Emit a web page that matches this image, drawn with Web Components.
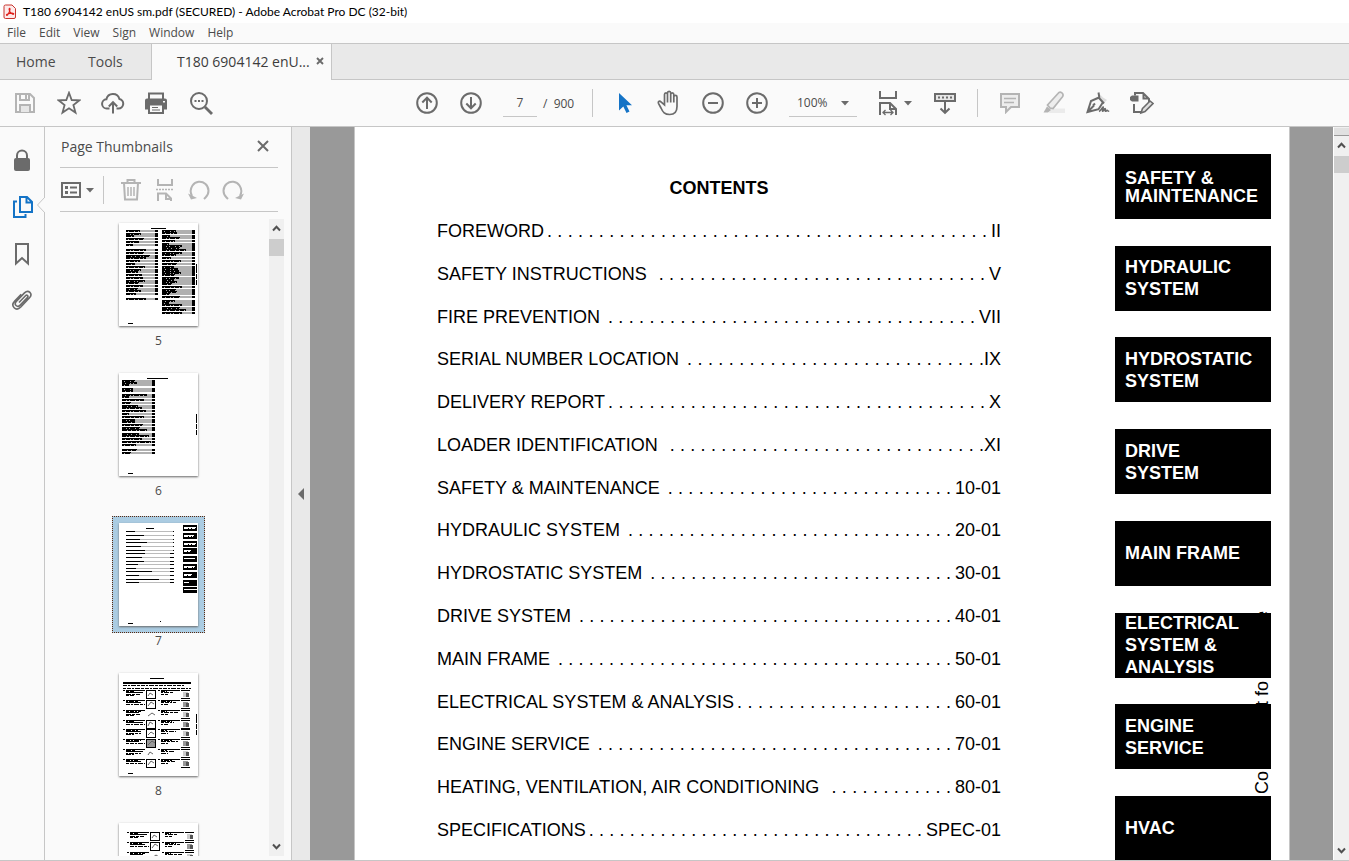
<!DOCTYPE html>
<html lang="en">
<head>
<meta charset="utf-8">
<title>T180 6904142 enUS sm.pdf (SECURED) - Adobe Acrobat Pro DC (32-bit)</title>
<style>
  html, body { margin: 0; height: 100%; overflow: hidden; }
  body { font-family: "Open Sans", "Noto Sans", sans-serif; font-size: 12px; color: #4b4b4b; background: #fafafa; }
</style>
</head>
<body>
<acro-app></acro-app>

<script>
const define = (name, html, setup) => {
  const template = document.createElement('template');
  template.innerHTML = '<style>*{box-sizing:border-box}button{font:inherit;color:inherit;background:none;border:0;padding:0;margin:0}a{color:inherit;text-decoration:none}</style>' + html;
  customElements.define(name, class extends HTMLElement {
    connectedCallback() {
      if (this.shadowRoot) return;
      this.attachShadow({ mode: 'open' }).appendChild(template.content.cloneNode(true));
      if (setup) setup.call(this, this.shadowRoot);
    }
  });
};

/* ---------- Icons ---------- */
const S = 'fill="none" stroke="currentColor" stroke-width="2"';
const ICONS = {
  pdf: `<svg width="14" height="16" viewBox="0 0 14 16"><path d="M2.5 1h6.500l3.500 3.500v8.500q0 1.500-1.500 1.500h-8.500q-1.500 0-1.500-1.500v-10.500q0-1.500 1.500-1.500z" fill="#fdeaea" stroke="#c8342e"/><path d="M3.600 11.300c-1-1.100 3-2.300 6.300-2.100c1.700.4.600 1.500-.6.900c-2.300-1.300-3.800-4.500-3-5.700c1.300-.7.900 2.800-1.500 6.200c-.4.600-.9.900-1.200.7z" fill="none" stroke="#e0201b" stroke-width="1.100"/></svg>`,
  save: `<svg width="22" height="22" viewBox="0 0 22 22"><g fill="none" stroke="#b4b4b4" stroke-width="2"><path d="M2 2h14l4 4v14h-18z"/><path d="M6 2v6h9v-6"/><path d="M6 20v-7h10v7" fill="#e6e6e6"/></g><path d="M11 3h2v4h-2z" fill="#b4b4b4"/></svg>`,
  star: `<svg width="24" height="24" viewBox="0 0 24 24"><path d="M12 1.800l2.700 7.200l7.800.3l-6.100 4.800l2.100 7.500l-6.500-4.300l-6.500 4.300l2.100-7.500l-6.100-4.800l7.800-.3z" fill="none" stroke="currentColor" stroke-width="1.800"/></svg>`,
  cloud: `<svg width="24" height="24" viewBox="0 0 24 24"><path d="M8.500 17.500h-2.500a4.600 4.600 0 0 1-.6-9.200a6.700 6.700 0 0 1 13-.3a4.800 4.800 0 0 1-.9 9.500h-2" ${S}/><path d="M12 22.500v-11M7.800 15.500l4.200-4.300l4.200 4.300" ${S}/></svg>`,
  print: `<svg width="24" height="24" viewBox="0 0 24 24"><path d="M4 8v-5.500h14v5.500" ${S}/><path d="M2 7.500h18a2 2 0 0 1 2 2v9h-4v-3.500h-14v3.500h-4v-9a2 2 0 0 1 2-2z" fill="currentColor"/><path d="M4 13.500h14v8.500h-14z" fill="#fafafa" stroke="currentColor" stroke-width="2"/><path d="M7 16.500h6M7 19h8" stroke="currentColor" stroke-width="1.200"/><path d="M18 10h2v1.500h-2z" fill="#fafafa"/></svg>`,
  search: `<svg width="24" height="24" viewBox="0 0 24 24"><circle cx="10" cy="10" r="8" ${S}/><path d="M16 16l7 7" stroke="currentColor" stroke-width="2.800"/><path d="M5.500 9h2v2h-2zM9 9h2v2h-2zM12.500 9h2v2h-2z" fill="currentColor"/></svg>`,
  up: `<svg width="24" height="24" viewBox="0 0 24 24"><circle cx="12" cy="12" r="9.800" ${S}/><path d="M12 18v-11M7.300 11.500l4.700-4.800l4.700 4.800" ${S}/></svg>`,
  down: `<svg width="24" height="24" viewBox="0 0 24 24"><circle cx="12" cy="12" r="9.800" ${S}/><path d="M12 6v11M7.300 12.500l4.700 4.800l4.700-4.800" ${S}/></svg>`,
  cursor: `<svg width="24" height="24" viewBox="0 0 24 24"><path d="M6 2v17.500l4.300-4l3.200 6.500l3-1.400l-3.100-6.300h5.600z" fill="#1473c6"/></svg>`,
  hand: `<svg width="24" height="26" viewBox="0 0 24 26"><path d="M7.500 15v-10.500c0-2.200 3-2.200 3 0v-1.500c0-2.200 3.200-2.200 3.200 0v1.500c0-2.200 3.100-2.200 3.100 0v2.500c0-2.100 3.200-2.100 3.200 0v9.500c0 5.500-3 8-7.300 8c-5 0-6.800-2.300-8.700-6.500l-2.500-4.700c-.7-2.200 1.300-2.700 2.500-1.300zM10.500 4.500v8M13.700 4v8.500M16.800 5.500v7" fill="none" stroke="currentColor" stroke-width="1.700"/></svg>`,
  minus: `<svg width="24" height="24" viewBox="0 0 24 24"><circle cx="12" cy="12" r="9.800" ${S}/><path d="M7 12h10" ${S}/></svg>`,
  plus: `<svg width="24" height="24" viewBox="0 0 24 24"><circle cx="12" cy="12" r="9.800" ${S}/><path d="M7 12h10M12 7v10" ${S}/></svg>`,
  caret: `<svg width="8" height="6" viewBox="0 0 8 6"><path d="M0 1h8l-4 4.500z" fill="#6b6b6b"/></svg>`,
  fit: `<svg width="18" height="26" viewBox="0 0 18 26"><path d="M1 1v7h16v-7M1 25v-12h10l6 6v6" ${S}/><path d="M11 13v6h6" ${S}/><path d="M3.500 22.500h11M6.500 20l-2.500 2.500l2.500 2.500M11.500 20l2.500 2.500l-2.500 2.500" fill="none" stroke="currentColor" stroke-width="1.300"/></svg>`,
  scroll: `<svg width="24" height="24" viewBox="0 0 24 24"><path d="M2 3h20v7h-20z" fill="#e6e6e6" stroke="currentColor" stroke-width="2"/><path d="M5 6.500h14" stroke="currentColor" stroke-width="2" stroke-dasharray="2 2"/><path d="M12 11v10.500M7.500 17.500l4.500 4.300l4.500-4.300" ${S}/></svg>`,
  comment: `<svg width="22" height="22" viewBox="0 0 22 22"><path d="M2 2h18v13h-8l-5 5v-5h-5z" fill="#ededed" stroke="#b4b4b4" stroke-width="2"/><path d="M5 6.500h12M5 10.500h10" stroke="#b4b4b4" stroke-width="1.500"/></svg>`,
  marker: `<svg width="24" height="24" viewBox="0 0 24 24"><path d="M8 17.500h15v4.500h-16z" fill="#ebebeb"/><path d="M5.500 14l10.500-11.500a2.700 2.700 0 0 1 4.500 3.300l-9.500 11.700l-3-.5z" fill="#ededed" stroke="#b4b4b4" stroke-width="1.700"/><path d="M5 15.500l4 3.500l-3 2.500h-4.500z" fill="#b4b4b4"/></svg>`,
  sign: `<svg width="24" height="24" viewBox="0 0 24 24"><path d="M13 2.500l4 4l4 2.500l-4 4z" fill="#dedede"/><path d="M12.500 1.500l1 6l4.500 5M13 6.500l-8 3.500l-3.500 11l11-2.800l4-6.200M2 20.500l6-6M7 14.500l2-2" fill="none" stroke="currentColor" stroke-width="2"/><path d="M13 20.500c2.500-1 3.500-5 4.200-4.500c.5.800-1.500 4-.7 4.300c1 .1 1.700-3 2.700-2.600c.7.400-.6 2.400.2 2.600c1 .2 1-1.300 1.800-1c.6.200.2 1 2 1" fill="none" stroke="currentColor" stroke-width="1.600"/></svg>`,
  edit: `<svg width="24" height="24" viewBox="0 0 24 24"><path d="M5 4.500v-2.500h8l6 6v3M13.500 2v5.500h5.500M4 13v8h8" ${S}/><path d="M2 4.500h6.500v6h-6.500l-2-1.500v-3z" fill="currentColor"/><path d="M12.500 17.500l7.500-7.500l3 2.500l-8 8l-4 1.500z" fill="#dedede" stroke="currentColor" stroke-width="1.600"/></svg>`,
  lock: `<svg width="20" height="24" viewBox="0 0 20 24"><path d="M5 11v-3.500a5 5 0 0 1 10 0v3.500" ${S}/><rect x="2" y="10" width="16" height="13" rx="2" fill="currentColor"/></svg>`,
  pages: `<svg width="24" height="24" viewBox="0 0 24 24"><path d="M10 2h7l5 5v10h-12z M16.500 2v5.500h5.500" fill="none" stroke="#1473c6" stroke-width="2"/><path d="M7 6.500h-3v15.500h11.500v-3" fill="none" stroke="#1473c6" stroke-width="2"/></svg>`,
  bookmark: `<svg width="16" height="24" viewBox="0 0 16 24"><path d="M2 2h12v19.500l-6-5.500l-6 5.500z" ${S}/></svg>`,
  clip: `<svg width="22" height="24" viewBox="0 0 22 24"><path d="M8 13.500l6.500-6.700c1.500-1.500 3.300.3 1.900 1.800l-7.200 7.500c-3 3-6.700-.7-3.900-3.700l8.200-8.500c4-3.900 8.700.8 5 4.800l-8.700 9.300c-4.900 4.900-10.800-1-6.100-6l6.500-6.800" fill="none" stroke="currentColor" stroke-width="1.600"/></svg>`,
  close: `<svg width="14" height="14" viewBox="0 0 14 14"><path d="M2 2l10 10M12 2l-10 10" stroke="currentColor" stroke-width="2"/></svg>`,
  closeSmall: `<svg width="8" height="8" viewBox="0 0 8 8"><path d="M1 1l6 6M7 1l-6 6" stroke="currentColor" stroke-width="1.900"/></svg>`,
  options: `<svg width="20" height="18" viewBox="0 0 20 18"><path d="M1 2h18v14h-18z" ${S}/><path d="M4 5h3v3h-3zM4 10h3v3h-3z" fill="currentColor"/><path d="M9 6.500h7M9 11.500h7" ${S}/></svg>`,
  trash: `<svg width="20" height="24" viewBox="0 0 20 24"><g fill="none" stroke="currentColor" stroke-width="2"><path d="M0 5h20M6.500 4.500v-2.500h7v2.500M3 5l1 16.500h12l1-16.500"/><path d="M7 9v9M10 9v9M13 9v9" stroke-width="1.500"/></g></svg>`,
  split: `<svg width="18" height="24" viewBox="0 0 18 24"><path d="M2 1v6h14v-6M2 23v-7.500h8l5 5v2.500M10 15.500v5.500h5" ${S}/><path d="M0 11.500h18" stroke="currentColor" stroke-width="1.600" stroke-dasharray="2 1"/></svg>`,
  ccw: `<svg width="22" height="22" viewBox="0 0 22 22"><path d="M4 17c-1.800-3.500-1.500-7.500.5-10.500c3-4.300 9-5 13-1.500c4 3.700 4 9.500 0 13.500l-1.500 1.500" ${S}/><path d="M0 14.500l3 6l6-1.500z" fill="currentColor"/></svg>`,
  cw: `<svg width="22" height="22" viewBox="0 0 22 22"><g transform="matrix(-1 0 0 1 22 0)"><path d="M4 17c-1.800-3.500-1.500-7.500.5-10.500c3-4.300 9-5 13-1.500c4 3.700 4 9.500 0 13.500l-1.500 1.500" ${S}/><path d="M0 14.500l3 6l6-1.500z" fill="currentColor"/></g></svg>`,
  chevUp: `<svg width="9" height="7" viewBox="0 0 9 7"><path d="M1 5.500l3.500-3.700l3.500 3.700" fill="none" stroke="#505050" stroke-width="2"/></svg>`,
  chevDown: `<svg width="9" height="7" viewBox="0 0 9 7"><path d="M1 1.500l3.500 3.700l3.500-3.700" fill="none" stroke="#505050" stroke-width="2"/></svg>`,
  collapse: `<svg width="6" height="12" viewBox="0 0 6 12"><path d="M6 0v12l-6-6z" fill="#6b6b6b"/></svg>`
};

define('acro-icon', `<style>:host{display:flex;align-items:center;justify-content:center;flex:none}svg{display:block;flex:none}</style><span id="i"></span>`,
  function (root) { root.getElementById('i').innerHTML = ICONS[this.getAttribute('name')]; });

define('tool-button', `<style>
  :host{display:flex;flex:none;width:24px;height:26px;color:#6b6b6b}
  button{display:flex;width:100%;height:100%;align-items:center;justify-content:center}
</style><button type="button"><acro-icon></acro-icon></button>`,
  function (root) {
    root.querySelector('button').setAttribute('aria-label', this.getAttribute('label'));
    root.querySelector('acro-icon').replaceWith(Object.assign(document.createElement('template'), { innerHTML: `<acro-icon name="${this.getAttribute('icon')}"></acro-icon>` }).content);
  });

/* ---------- Window chrome ---------- */
define('title-bar', `<style>
  :host{display:flex;align-items:center;height:23px;padding-left:3px;gap:6px;background:#fff;color:#000;font-family:Lato,"Open Sans",sans-serif}
</style><acro-icon name="pdf"></acro-icon><span><slot></slot></span>`);

define('menu-bar', `<style>
  :host{display:block;background:#fafafa;border-bottom:1px solid #c6c6c6}
  nav{display:flex;align-items:center;height:20px;padding:0 0 2px 7px;gap:13px}
</style><nav><button>File</button><button>Edit</button><button>View</button><button>Sign</button><button>Window</button><button>Help</button></nav>`);

define('tab-strip', `<style>
  :host{display:flex;height:36px;background:#e9e9e9;font-size:14px;box-shadow:inset 0 -1px #c6c6c6}
  .plain{padding:0 0 2px 16px;width:72px;text-align:left}
  .tools{width:79px}
  .doc{display:flex;align-items:center;width:181px;padding:0 0 2px 25px;background:#fafafa;border:solid #c6c6c6;border-width:0 1px;color:#3c3c3c}
  .doc span{flex:1;white-space:nowrap}
  .close{width:25px;height:20px;display:flex;justify-content:center;align-items:center;color:#6b6b6b}
</style>
<button class="plain">Home</button><button class="plain tools">Tools</button>
<div class="doc"><span>T180 6904142 enU...</span><button class="close" aria-label="Close tab"><acro-icon name="closeSmall"></acro-icon></button></div>`);

define('tool-bar', `<style>
  :host{display:flex;align-items:center;height:47px;padding-left:13px;background:#fafafa;border-bottom:1px solid #c6c6c6;gap:20px}
  .nav{margin-left:182px}
  .page{display:flex;gap:6px;align-items:center;white-space:pre;width:69px}
  input{width:34px;height:27px;border:0;border-bottom:1px solid #c6c6c6;background:none;font:inherit;color:inherit;text-align:center;padding:0;outline:0;flex:none}
  .rule{width:1px;height:28px;background:#c6c6c6}
  .zoom{display:grid;grid-template:27px / 68px;align-items:center}
  .zoom>*{grid-area:1/1}
  select{appearance:none;height:27px;border:0;border-bottom:1px solid #c6c6c6;background:none;font:inherit;color:inherit;padding:0 0 0 8px;border-radius:0}
  .zoom acro-icon{justify-self:end;margin-right:8px;pointer-events:none}
  .fit{display:flex;align-items:center;gap:4px}
  .fit tool-button{width:22px}
  .fit acro-icon{width:10px}
</style>
<tool-button icon="save" label="Save"></tool-button>
<tool-button icon="star" label="Star"></tool-button>
<tool-button icon="cloud" label="Upload"></tool-button>
<tool-button icon="print" label="Print"></tool-button>
<tool-button icon="search" label="Find"></tool-button>
<tool-button class="nav" icon="up" label="Previous page"></tool-button>
<tool-button icon="down" label="Next page"></tool-button>
<label class="page"><input value="7" aria-label="Page number"><span>/  900</span></label>
<span class="rule"></span>
<tool-button icon="cursor" label="Select"></tool-button>
<tool-button icon="hand" label="Pan"></tool-button>
<tool-button icon="minus" label="Zoom out"></tool-button>
<tool-button icon="plus" label="Zoom in"></tool-button>
<label class="zoom"><select aria-label="Zoom level"><option>100%</option></select><acro-icon name="caret"></acro-icon></label>
<span class="fit"><tool-button icon="fit" label="Fit width"></tool-button><acro-icon name="caret"></acro-icon></span>
<tool-button icon="scroll" label="Scrolling"></tool-button>
<span class="rule"></span>
<tool-button icon="comment" label="Comment"></tool-button>
<tool-button icon="marker" label="Highlight"></tool-button>
<tool-button icon="sign" label="Sign"></tool-button>
<tool-button icon="edit" label="Edit"></tool-button>`);

define('side-rail', `<style>
  :host{display:block;position:relative;width:45px;flex:none;border-right:1px solid #c6c6c6;background:#fafafa}
  nav{display:flex;flex-direction:column;align-items:center;padding-top:20px;gap:21px}
  svg{position:absolute;right:-1px;top:70px}
</style><nav>
<tool-button icon="lock" label="Security"></tool-button>
<tool-button icon="pages" label="Page thumbnails"></tool-button>
<tool-button icon="bookmark" label="Bookmarks"></tool-button>
<tool-button icon="clip" label="Attachments"></tool-button></nav>
<svg width="8" height="16"><path d="M8 0l-7.500 8l7.500 8" fill="#fafafa" stroke="#c6c6c6"/></svg>`);

/* ---------- Thumbnails ---------- */
const bar = (x, y, w, h = 2, c = '#000') => `<rect x="${x}" y="${y}" width="${w}" height="${h}" fill="${c}"/>`;
const words = (x, y, w, c = '#000') => {
  let s = '';
  for (let p = 0, k = (x * 3 + y * 5) % 4; p < w; k = (k + 1) % 4) {
    const n = Math.min([4, 2, 5, 3][k], w - p);
    s += bar(x + p, y, n, 1, c);
    p += n + 1;
  }
  return s;
};
const entry = (x, y, w, end, c = '#b0b0b0') => bar(x, y, end - x, 2, c) + bar(x, y, w, 1) + words(x, y + 1, w) + bar(end - 3, y, 3, 2);
const common = side => (side ? bar(77, 41, 1, 9) + bar(77, 51, 1, 5) + bar(77, 57, 1, 5) : '') + bar(9, 100, 5, 1);
const steps = (x, boxX, n) => {
  let s = '';
  for (let i = 0; i < n; i++) {
    const y = 17 + i * 10 - (i > 3 ? 1 : 0);
    s += bar(x, y, 2, 1) + bar(x + 3, y, 19, 1) + words(x + 3, y + 1, 9 + i % 3 * 3) + bar(x + 3, y + 2, 17 - i % 3 * 2, 1) + words(x + 3, y + 4, 15 + i % 2 * 4) + (i % 2 ? '' : words(x + 3, y + 5, 8));
    s += bar(boxX, y, 10, 9, i % 4 === 2 ? '#fff' : '#000') + bar(boxX + 1, y + 1, 8, 7, i === 5 ? '#999' : '#fff');
    s += `<path d="M${boxX + 2} ${y + 6}l${2 + i % 3} ${-3 - i % 2}l3 2" fill="none" stroke="#666" shape-rendering="auto"/>`;
    s += bar(x + 35, y, 2, 1) + bar(x + 38, y, 19, 1) + words(x + 38, y + 1, 6 + i % 2 * 5) + words(x + 38, y + 2, 13 + i % 3 * 2) + words(x + 38, y + 4, 7);
    s += bar(boxX + 35, y, 9, 1) + bar(boxX + 35, y + 8, 9, 1) + bar(boxX + 37, y + 2, 5, 5, i % 2 ? '#999' : '#ccc') + bar(boxX + 40, y + 3, 3, 4, '#555');
  }
  return s;
};
const SHEETS = {
  5: () => {
    const w = [14, 15, 8, 18, 13, 7, 20, 18, 24, 20, 14, 9, 19, 15, 12, 16, 17, 19, 13, 17, 12, 15, 10, 20];
    const l = [7, 10, 12, 15, 18, 21, 26, 29, 32, 34, 37, 40, 43, 46, 48, 51, 54, 57, 59, 62, 65, 67, 70, 75];
    const r = [7, 9, 12, 14, 17, 20, 22, 24, 26, 29, 31, 34, 37, 40, 43, 45, 47, 49, 51, 54, 56, 58, 60, 63, 66, 68, 70, 73, 77, 79, 81, 84, 86, 89];
    return bar(32, 5, 15, 1) + l.map((y, i) => entry(7, y, w[i], 39)).join('') + r.map((y, i) => entry(43, y, w[i % 24], 76)).join('') + common(true);
  },
  6: () => {
    const w = [13, 15, 7, 11, 11, 25, 7, 22, 9, 16, 20, 24, 7, 22, 13, 13, 21, 18, 25, 17, 27, 20, 29, 14, 15, 9];
    const l = [7, 9, 11, 15, 17, 21, 23, 26, 29, 32, 34, 37, 40, 43, 46, 48, 51, 54, 56, 60, 62, 65, 68, 71, 76, 79];
    return bar(28, 5, 21, 1) + l.map((y, i) => entry(3, y, w[i], 36)).join('') + common(true);
  },
  7: () => {
    const w = [9, 18, 14, 21, 15, 19, 19, 16, 18, 12, 10, 26, 13, 33, 13];
    const l = [8, 12, 16, 19, 23, 27, 30, 34, 38, 41, 45, 48, 52, 56, 59];
    let s = bar(27, 5, 8, 1) + l.map((y, i) => bar(7, y, 48, 1, '#bbb') + bar(7, y, w[i], 1) + bar(i < 6 ? 54 : 51, y, i < 6 ? 1 : 4, 1)).join('');
    [12, 10, 12, 7, 11, 11, 8, 5, 13].forEach((n, i) => {
      const y = 2 + Math.round(i * 7.8);
      s += bar(64, y, 14, 6) + bar(65, y + 2, n, 1, '#fff') + (i < 7 && i !== 4 ? words(65, y + 3, n - 1, '#fff') : '');
    });
    return s + bar(41, 98, 1, 1) + common(false);
  },
  8: () => bar(31, 5, 14, 1) + bar(4, 9, 68, 2) + words(4, 12, 62) + words(4, 15, 68) + steps(4, 27, 8) + common(true),
  9: () => `<g transform="translate(4 -8)">${steps(4, 27, 8)}</g>`
};

define('page-thumb', `<style>
  :host{display:block;width:93px;text-align:center}
  a{display:block}
  .frame{padding:7px}
  :host([selected]) .frame{background:#abcce2;outline:1px dotted #5a2a10;outline-offset:-1px}
  svg{display:block;background:#fff;box-shadow:0 1px 2px #666}
  .no{display:block;height:16px;line-height:16px}
</style><a href="#"><div class="frame"><svg width="79" height="103" viewBox="0 0 79 103" shape-rendering="crispEdges"></svg></div></a>`,
  function (root) {
    const n = this.getAttribute('page');
    root.querySelector('svg').innerHTML = SHEETS[n]();
    if (this.hasAttribute('unlabelled')) return;
    const no = root.querySelector('a').appendChild(document.createElement('span'));
    no.className = 'no';
    no.textContent = n;
  });

define('scroll-bar', `<style>
  :host{display:flex;flex-direction:column;align-items:center;width:15px;flex:none;background:#f0f0f0}
  acro-icon{height:20px;width:100%}
  acro-icon:first-of-type{padding-bottom:2px}
  i{width:100%;height:17px;background:#cdcdcd}
  b{flex:1}
</style><acro-icon name="chevUp"></acro-icon><i></i><b></b><acro-icon name="chevDown"></acro-icon>`);

define('thumb-panel', `<style>
  :host{display:flex;flex-direction:column;width:247px;flex:none;border-right:1px solid #c6c6c6;background:#fafafa;min-height:0}
  header,.tools{display:flex;align-items:center;margin:0 13px 0 15px;border-bottom:1px solid #c6c6c6}
  header{height:41px;justify-content:space-between;font-size:14px;padding:0 3px 2px 0}
  h2{font:inherit;margin:0 0 0 1px}
  .tools{height:44px;color:#b4b4b4}
  .tools tool-button{color:inherit}
  .tools .opt{color:#6b6b6b;width:22px}
  .caret{margin-left:4px}
  .rule{width:1px;height:28px;background:#c6c6c6;margin:0 15px 0 9px}
  .set{display:flex;gap:10px}
  .scroll{display:flex;flex:1;min-height:0;margin:0 7px 4px 0}
  .list{flex:1;display:flex;flex-direction:column;align-items:center;gap:17px;padding:4px 0 0 3px;overflow:hidden}
  .list>*{flex:none}
  scroll-bar{margin-top:7px}
</style>
<header><h2>Page Thumbnails</h2><tool-button icon="close" label="Close panel"></tool-button></header>
<div class="tools"><tool-button class="opt" icon="options" label="Options"></tool-button><acro-icon class="caret" name="caret"></acro-icon><span class="rule"></span>
<div class="set"><tool-button icon="trash" label="Delete"></tool-button><tool-button icon="split" label="Extract"></tool-button><tool-button icon="ccw" label="Rotate left"></tool-button><tool-button icon="cw" label="Rotate right"></tool-button></div></div>
<div class="scroll"><div class="list">
<page-thumb page="5"></page-thumb><page-thumb page="6"></page-thumb><page-thumb page="7" selected></page-thumb><page-thumb page="8"></page-thumb><page-thumb page="9" unlabelled></page-thumb>
</div><scroll-bar></scroll-bar></div>`);

/* ---------- Document ---------- */
define('toc-row', `<style>
  :host{display:block}
  a{display:flex;white-space:nowrap;line-height:21px}
  .lead{flex:1;min-width:0;text-align:justify;text-align-last:justify;white-space:normal;height:21px;margin:0 4px 0 8px}
  :host([near]) .lead{margin-left:3px}
  :host([far]) .lead{margin-left:12px}
  :host([flush]) .lead{margin-right:0}
</style><a href="#"><span><slot></slot></span><span class="lead"></span><span class="no"></span></a>`,
  function (root) {
    root.querySelector('.lead').textContent = Array(+this.getAttribute('dots')).fill('.').join(' ');
    root.querySelector('.no').textContent = this.getAttribute('page');
  });

define('section-tab', `<style>
  :host{display:block;flex:none}
  a{display:flex;align-items:center;height:65px;padding-left:10px;background:#000;color:#fff;font-weight:bold;line-height:22px;white-space:pre}
  :host([compact]) a{line-height:18px}
</style><a href="#"><span><slot></slot></span></a>`);

define('manual-page', `<style>
  :host{display:flex;position:relative;flex:1;overflow:hidden;background:#fff;color:#000;border:solid #c6c6c6;border-width:0 1px;padding:27px 18px 0 82px;gap:114px;font-family:"Liberation Sans",Arial,sans-serif;font-size:18px}
  .toc{flex:1}
  h1{margin:24px 0 23px;font-size:18px;line-height:20px;text-align:center}
  .rows{display:flex;flex-direction:column;justify-content:space-between;height:620px}
  .tabs{position:relative;display:flex;flex-direction:column;justify-content:space-between;width:156px;height:707px;flex:none}
  section-tab{position:relative}
  /* Watermark running up the page margin; the section tabs cover most of it. */
  .mark{position:absolute;right:-1px;writing-mode:vertical-rl;rotate:180deg;line-height:20px;white-space:nowrap}
  .low{bottom:67px}
  .mid{bottom:155px}
  .top{bottom:240px}
</style>
<div class="toc"><h1>CONTENTS</h1><div class="rows">
<toc-row dots="43" page="II" near>FOREWORD</toc-row>
<toc-row dots="32" page="V" far>SAFETY INSTRUCTIONS</toc-row>
<toc-row dots="36" page="VII">FIRE PREVENTION</toc-row>
<toc-row dots="29" page="IX" flush>SERIAL NUMBER LOCATION</toc-row>
<toc-row dots="37" page="X" near>DELIVERY REPORT</toc-row>
<toc-row dots="31" page="XI" flush far>LOADER IDENTIFICATION</toc-row>
<toc-row dots="28" page="10-01">SAFETY &amp; MAINTENANCE</toc-row>
<toc-row dots="32" page="20-01">HYDRAULIC SYSTEM</toc-row>
<toc-row dots="30" page="30-01">HYDROSTATIC SYSTEM</toc-row>
<toc-row dots="37" page="40-01">DRIVE SYSTEM</toc-row>
<toc-row dots="39" page="50-01">MAIN FRAME</toc-row>
<toc-row dots="21" page="60-01" near>ELECTRICAL SYSTEM &amp; ANALYSIS</toc-row>
<toc-row dots="35" page="70-01">ENGINE SERVICE</toc-row>
<toc-row dots="12" page="80-01" far>HEATING, VENTILATION, AIR CONDITIONING</toc-row>
<toc-row dots="33" page="SPEC-01" near>SPECIFICATIONS</toc-row>
</div></div>
<div class="tabs"><span class="mark low">Co</span><span class="mark mid">t fo</span><span class="mark top">e</span>
<section-tab compact>SAFETY &amp;<br>MAINTENANCE</section-tab>
<section-tab>HYDRAULIC<br>SYSTEM</section-tab>
<section-tab>HYDROSTATIC<br>SYSTEM</section-tab>
<section-tab>DRIVE<br>SYSTEM</section-tab>
<section-tab>MAIN FRAME</section-tab>
<section-tab>ELECTRICAL<br>SYSTEM &amp;<br>ANALYSIS</section-tab>
<section-tab>ENGINE<br>SERVICE</section-tab>
<section-tab>HVAC</section-tab>
</div>`);

define('doc-view', `<style>
  :host{display:flex;flex:1;min-width:0;background:#999}
  .split{display:flex;align-items:center;justify-content:center;width:18px;background:#e9e9e9}
  .canvas{display:flex;flex:1;padding:0 43px 0 44px;min-width:0}
  .side{display:flex;flex-direction:column;background:#f0f0f0;border-left:1px solid #fff}
  .box{height:8px;background:#e1e1e1;border-bottom:1px solid #999;margin-top:1px}
  scroll-bar{flex:1}
</style>
<button class="split" aria-label="Collapse panel"><acro-icon name="collapse"></acro-icon></button>
<div class="canvas"><manual-page></manual-page></div>
<div class="side"><div class="box"></div><scroll-bar></scroll-bar></div>`);

define('acro-app', `<style>
  :host{display:flex;flex-direction:column;height:100vh;overflow:hidden}
  main{display:flex;flex:1;min-height:0;overflow:hidden;border-bottom:1px solid #c6c6c6}
</style>
<title-bar>T180 6904142 enUS sm.pdf (SECURED) - Adobe Acrobat Pro DC (32-bit)</title-bar>
<menu-bar></menu-bar><tab-strip></tab-strip><tool-bar></tool-bar>
<main><side-rail></side-rail><thumb-panel></thumb-panel><doc-view></doc-view></main>`);
</script>
</body>
</html>
